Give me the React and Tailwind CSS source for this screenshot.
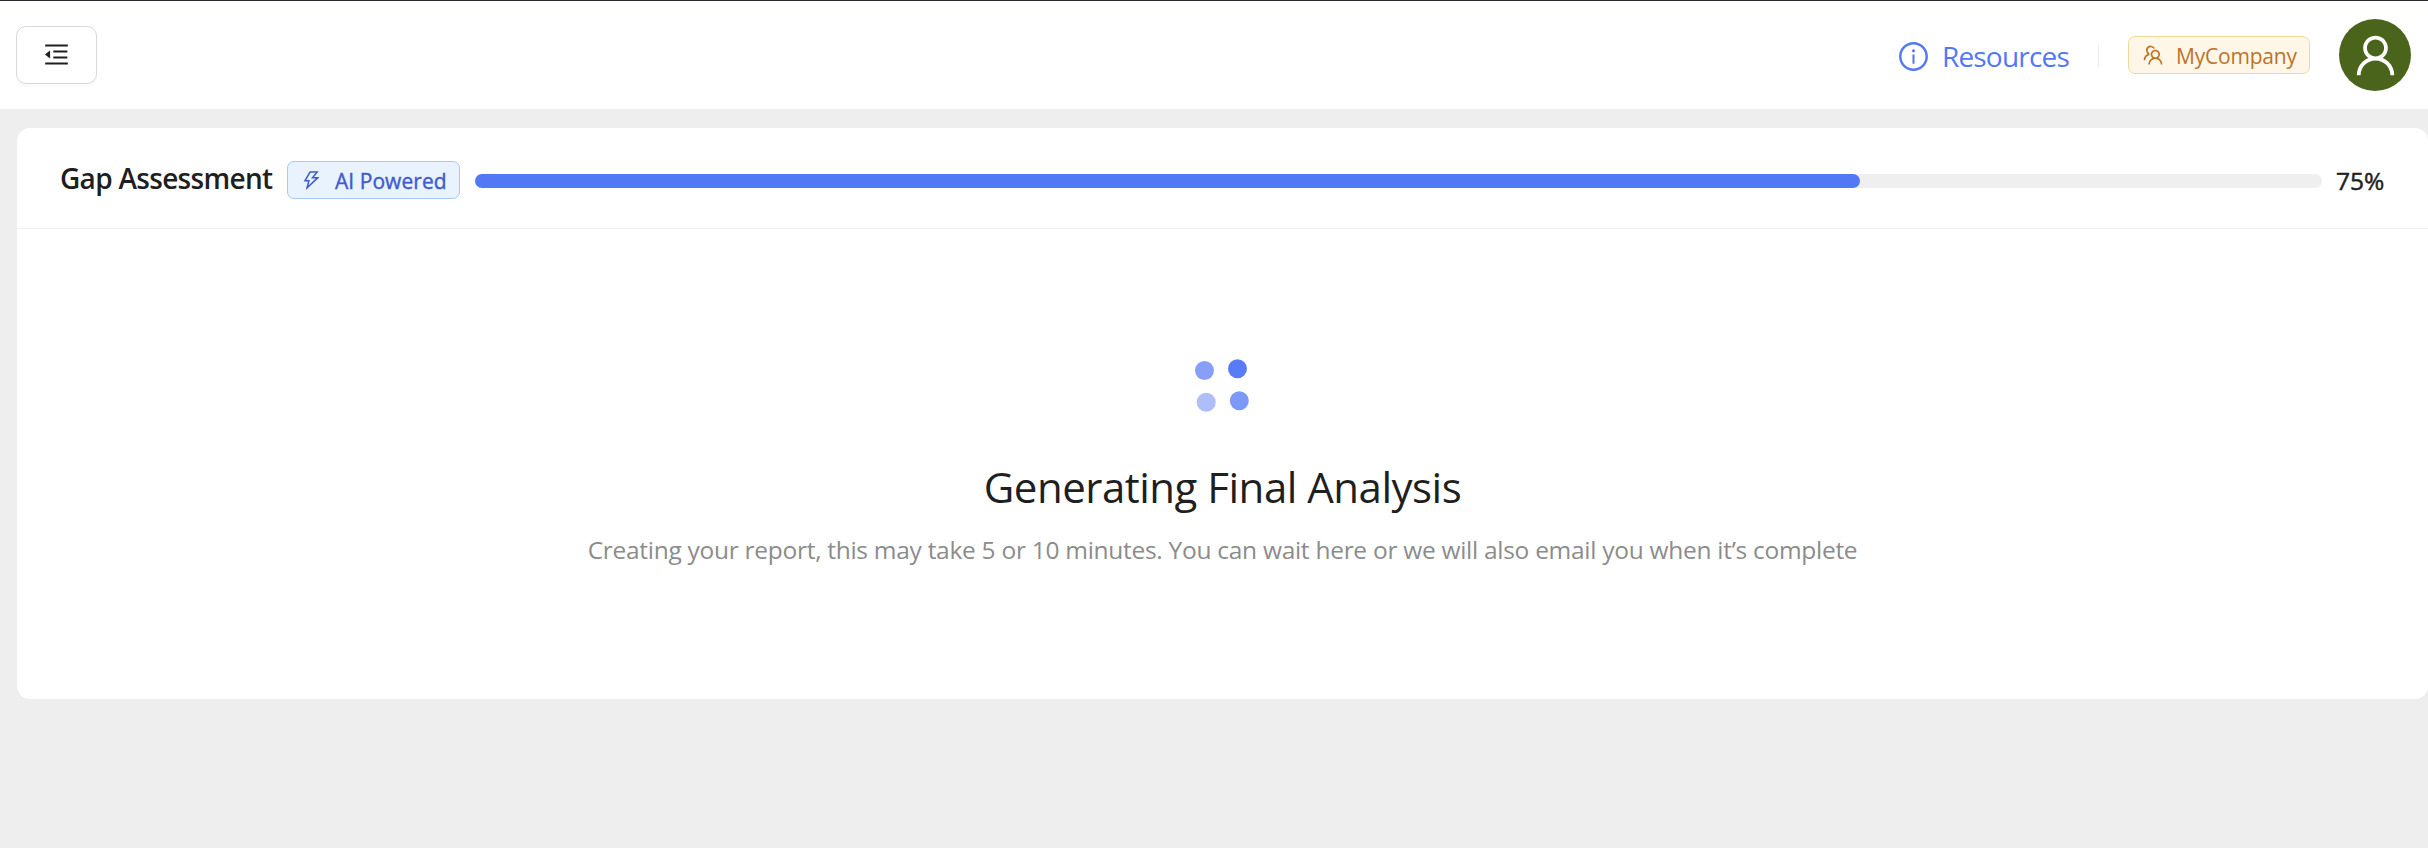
import React from "react";
import {
  AiOutlineInfoCircle,
  AiOutlineMenuFold,
  AiOutlineTeam,
  AiOutlineThunderbolt,
  AiOutlineUser,
} from "react-icons/ai";

function TopBar() {
  return (
    <header className="flex h-[109px] items-center justify-between border-t border-[#2b2a33] bg-white pl-4 pr-[17px]">
      <button className="flex h-[58px] w-[81px] items-center justify-center rounded-[10px] border border-[#d9d9d9] bg-white pb-[2px] text-[#1f1f1f] shadow-[0_3px_0_rgba(0,0,0,0.02)]">
        <AiOutlineMenuFold className="size-[29px]" />
      </button>
      <div className="flex items-center">
        <a className="flex items-center gap-[12px] pt-[2px] text-[#5378f6]">
          <AiOutlineInfoCircle className="size-[33px]" />
          <span className="whitespace-nowrap text-[28px] leading-[40px] tracking-[-0.8px]">Resources</span>
        </a>
        <div className="ml-[29px] h-[23px] w-px bg-[#ececec]" />
        <div className="ml-[29px] flex h-[38px] w-[182px] items-center gap-[11px] rounded-[7px] border border-[#f2d999] bg-[#fef7e8] pl-[12px] text-[#bd7228]">
          <AiOutlineTeam className="size-[24px]" />
          <span className="whitespace-nowrap pt-[3px] text-[21px] tracking-[-0.2px]">MyCompany</span>
        </div>
        <div className="ml-[29px] flex size-[72px] items-center justify-center rounded-full bg-[#4a651b] text-white">
          <AiOutlineUser className="size-[51px]" />
        </div>
      </div>
    </header>
  );
}

function Loader() {
  return (
    <svg className="h-[54px] w-[56px]" viewBox="0 0 56 54">
      <circle cx="9.5" cy="12.5" r="9.5" fill="#879ff9" />
      <circle cx="42.5" cy="10.7" r="9.5" fill="#587cf7" />
      <circle cx="11.2" cy="44.3" r="9.5" fill="#aebefb" />
      <circle cx="44.3" cy="42.7" r="9.5" fill="#7c98f8" />
    </svg>
  );
}

export default function App() {
  return (
    <div className="flex h-[848px] w-[2428px] flex-col overflow-hidden bg-[#eeeeee] font-['Open_Sans','Noto_Sans',sans-serif]">
      <TopBar />
      <main className="pl-[17px] pt-[19px]">
        <section className="flex h-[571px] flex-col rounded-[13px] bg-white">
          <div className="flex h-[101px] items-center border-b border-[#efefef] pl-[43px] pr-[43px]">
            <h1 className="w-[227px] whitespace-nowrap text-[28px] font-semibold leading-[40px] tracking-[-0.7px] text-[#1f1f1f]">
              Gap Assessment
            </h1>
            <div className="mt-[4px] flex h-[38px] w-[173px] items-center gap-[12px] rounded-[7px] border border-[#a6c8fa] bg-[#e9f3fe] pl-[12px] text-[#3f5bd0]">
              <AiOutlineThunderbolt className="size-[23px]" />
              <span className="whitespace-nowrap pt-[3px] text-[21px] tracking-[0.05px] [-webkit-text-stroke:0.4px]">AI Powered</span>
            </div>
            <div className="ml-[15px] mt-[6px] h-[14px] w-[1847px] rounded-full bg-[#efefef]">
              <div className="h-full w-3/4 rounded-full bg-[#5378f6]" />
            </div>
            <span className="ml-[14px] mt-[7px] whitespace-nowrap text-[24.5px] text-[#1f1f1f] [-webkit-text-stroke:0.5px]">75%</span>
          </div>
          <div className="flex flex-col items-center pt-[129px]">
            <Loader />
            <h2 className="mt-[45px] whitespace-nowrap text-[42px] leading-[60px] tracking-[-0.5px] text-[#1f1f1f]">Generating Final Analysis</h2>
            <p className="mt-[15px] whitespace-nowrap text-[24.5px] leading-[36px] tracking-[-0.28px] text-[#8c8c8c]">
              Creating your report, this may take 5 or 10 minutes. You can wait here or we will also email you when it’s complete
            </p>
          </div>
        </section>
      </main>
    </div>
  );
}
